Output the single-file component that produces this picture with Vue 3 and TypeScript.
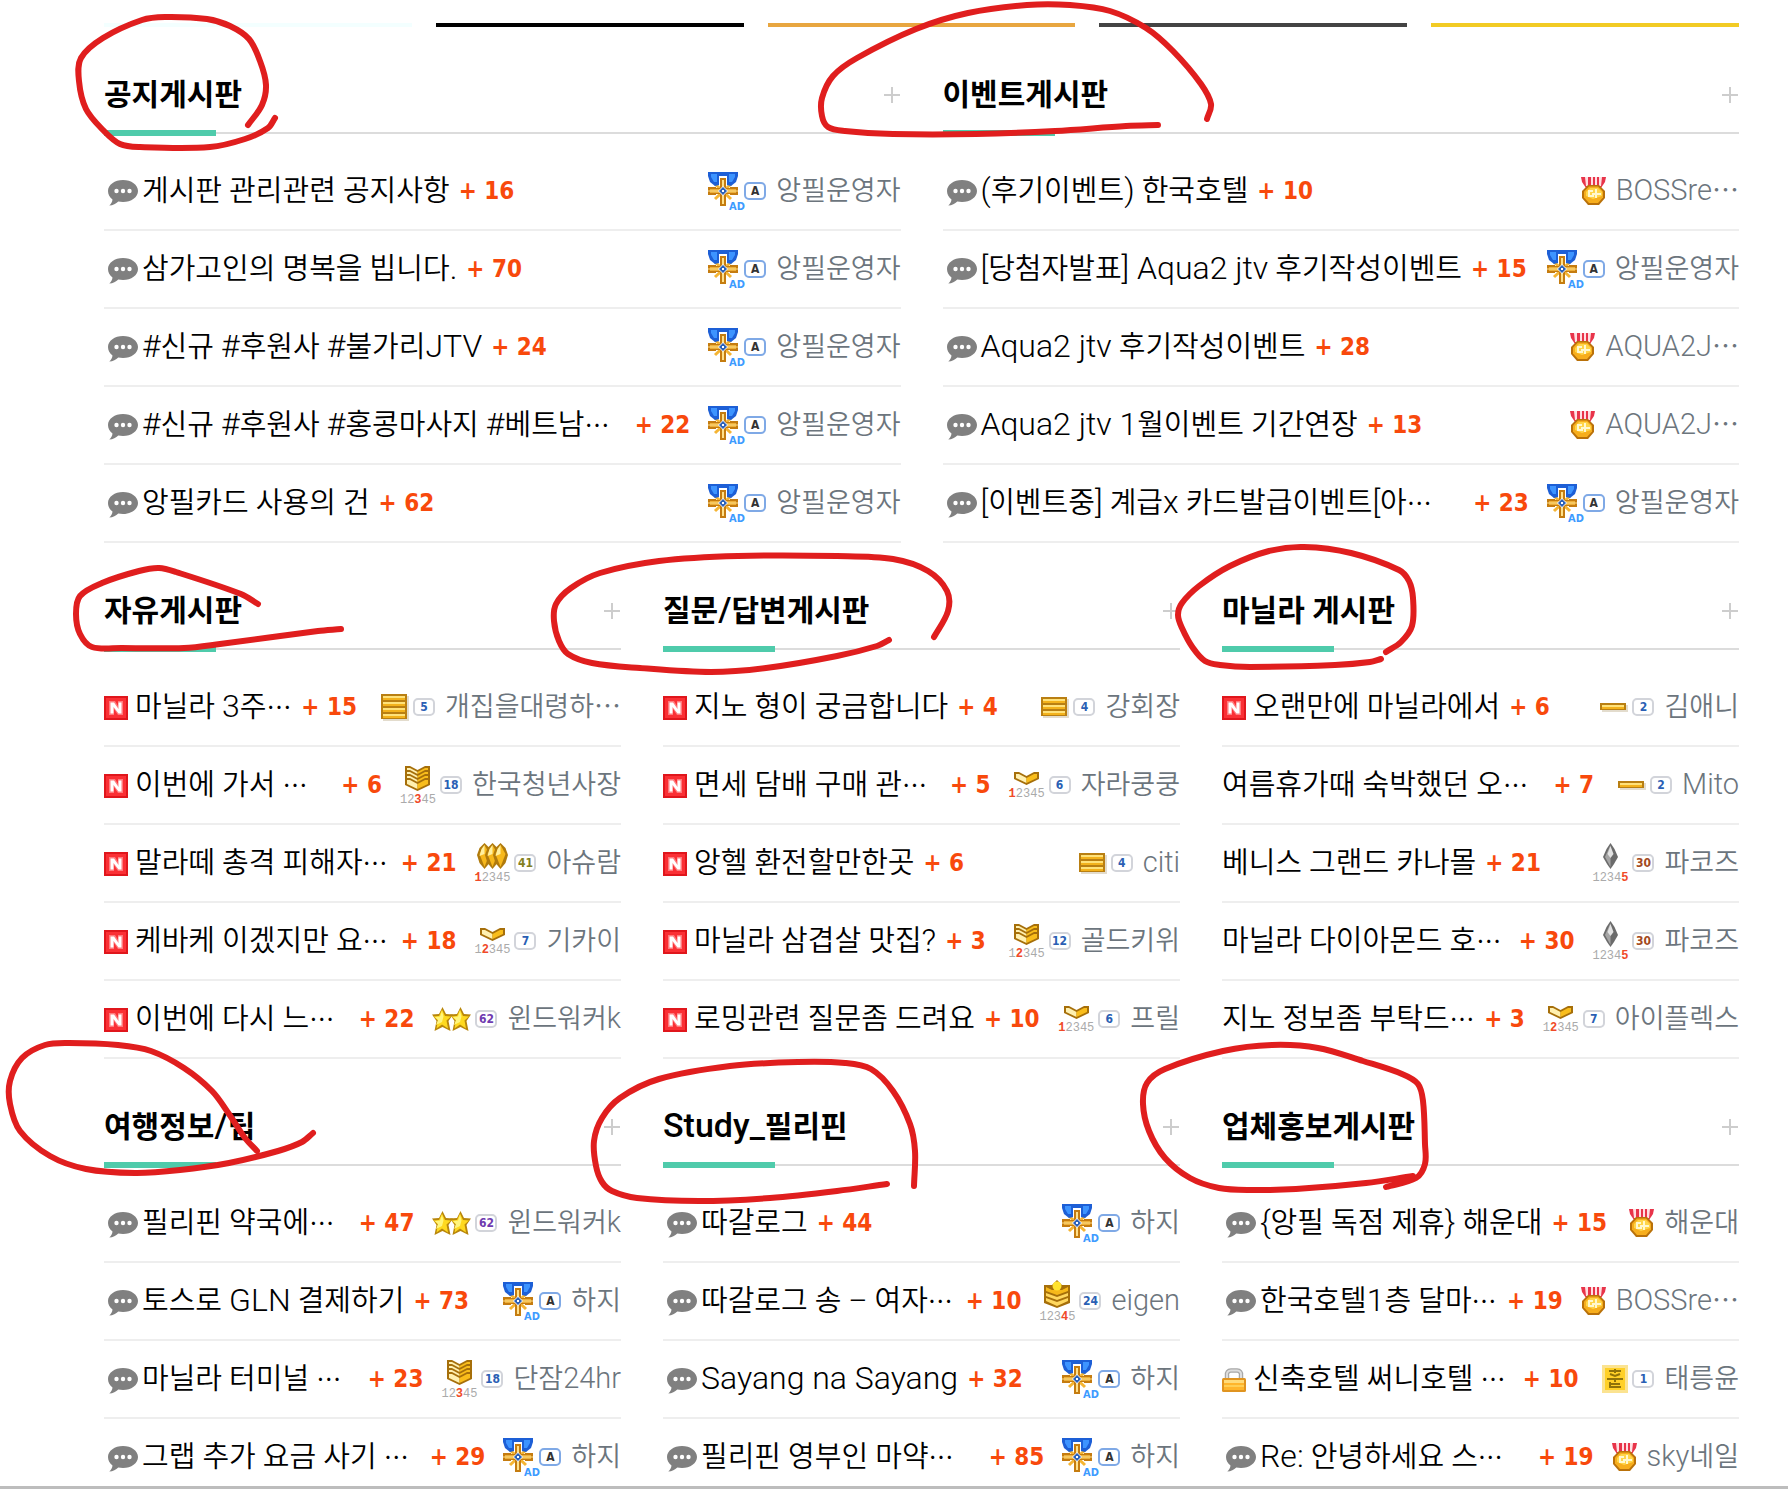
<script setup lang="ts">
type Art = 'admin' | 'gold' | 'bars' | 'chevron' | 'crown' | 'gems' | 'silver' | 'stars' | 'card'
type Icon = 'talk' | 'new' | 'lock' | ''

interface Rank {
  art: Art
  n?: number
  step?: number
  badge?: string
  tone?: string
}
interface Post {
  icon: Icon
  title: string
  count: number
  rank: Rank
  author: string
}
interface Board {
  name: string
  posts: Post[]
}
interface Run {
  text: string
  kind: 'latin' | 'dots' | 'hangul'
}
type Point = [number, number]

const admin: Rank = { art: 'admin', badge: 'A', tone: 'admin' }
const gold: Rank = { art: 'gold' }
const stars: Rank = { art: 'stars', badge: '62', tone: 'purple' }
const silver: Rank = { art: 'silver', step: 5, badge: '30', tone: 'brown' }
const gems: Rank = { art: 'gems', step: 1, badge: '41', tone: 'olive' }
const card: Rank = { art: 'card', badge: '1' }
const crown: Rank = { art: 'crown', step: 4, badge: '24' }
const bars = (n: number, badge: string): Rank => ({ art: 'bars', n, badge })
const chevron = (n: number, step: number, badge: string): Rank => ({ art: 'chevron', n, step, badge })

const post = (icon: Icon, title: string, count: number, rank: Rank, author: string): Post => ({
  icon, title, count, rank, author,
})

const banners = ['#f3ffff', '#000000', '#e8a640', '#444444', '#f2cb24']

const groups: Board[][] = [
  [
    {
      name: '공지게시판',
      posts: [
        post('talk', '게시판 관리관련 공지사항', 16, admin, '앙필운영자'),
        post('talk', '삼가고인의 명복을 빕니다.', 70, admin, '앙필운영자'),
        post('talk', '#신규 #후원사 #불가리JTV', 24, admin, '앙필운영자'),
        post('talk', '#신규 #후원사 #홍콩마사지 #베트남⋯', 22, admin, '앙필운영자'),
        post('talk', '앙필카드 사용의 건', 62, admin, '앙필운영자'),
      ],
    },
    {
      name: '이벤트게시판',
      posts: [
        post('talk', '(후기이벤트) 한국호텔', 10, gold, 'BOSSre⋯'),
        post('talk', '[당첨자발표] Aqua2 jtv 후기작성이벤트', 15, admin, '앙필운영자'),
        post('talk', 'Aqua2 jtv 후기작성이벤트', 28, gold, 'AQUA2J⋯'),
        post('talk', 'Aqua2 jtv 1월이벤트 기간연장', 13, gold, 'AQUA2J⋯'),
        post('talk', '[이벤트중] 계급x 카드발급이벤트[아⋯', 23, admin, '앙필운영자'),
      ],
    },
  ],
  [
    {
      name: '자유게시판',
      posts: [
        post('new', '마닐라 3주⋯', 15, bars(4, '5'), '개집을대령하⋯'),
        post('new', '이번에 가서 ⋯', 6, chevron(4, 3, '18'), '한국청년사장'),
        post('new', '말라떼 총격 피해자⋯', 21, gems, '아슈람'),
        post('new', '케바케 이겠지만 요⋯', 18, chevron(1, 2, '7'), '기카이'),
        post('new', '이번에 다시 느⋯', 22, stars, '윈드워커k'),
      ],
    },
    {
      name: '질문/답변게시판',
      posts: [
        post('new', '지노 형이 궁금합니다', 4, bars(3, '4'), '강회장'),
        post('new', '면세 담배 구매 관⋯', 5, chevron(1, 1, '6'), '자라쿵쿵'),
        post('new', '앙헬 환전할만한곳', 6, bars(3, '4'), 'citi'),
        post('new', '마닐라 삼겹살 맛집?', 3, chevron(3, 2, '12'), '골드키위'),
        post('new', '로밍관련 질문좀 드려요', 10, chevron(1, 1, '6'), '프릴'),
      ],
    },
    {
      name: '마닐라 게시판',
      posts: [
        post('new', '오랜만에 마닐라에서', 6, bars(1, '2'), '김애니'),
        post('', '여름휴가때 숙박했던 오⋯', 7, bars(1, '2'), 'Mito'),
        post('', '베니스 그랜드 카나몰', 21, silver, '파코즈'),
        post('', '마닐라 다이아몬드 호⋯', 30, silver, '파코즈'),
        post('', '지노 정보좀 부탁드⋯', 3, chevron(1, 2, '7'), '아이플렉스'),
      ],
    },
  ],
  [
    {
      name: '여행정보/팁',
      posts: [
        post('talk', '필리핀 약국에⋯', 47, stars, '윈드워커k'),
        post('talk', '토스로 GLN 결제하기', 73, admin, '하지'),
        post('talk', '마닐라 터미널 ⋯', 23, chevron(4, 3, '18'), '단잠24hr'),
        post('talk', '그랩 추가 요금 사기 ⋯', 29, admin, '하지'),
      ],
    },
    {
      name: 'Study_필리핀',
      posts: [
        post('talk', '따갈로그', 44, admin, '하지'),
        post('talk', '따갈로그 송 – 여자⋯', 10, crown, 'eigen'),
        post('talk', 'Sayang na Sayang', 32, admin, '하지'),
        post('talk', '필리핀 영부인 마약⋯', 85, admin, '하지'),
      ],
    },
    {
      name: '업체홍보게시판',
      posts: [
        post('talk', '{앙필 독점 제휴} 해운대', 15, gold, '해운대'),
        post('talk', '한국호텔1층 달마⋯', 19, gold, 'BOSSre⋯'),
        post('lock', '신축호텔 써니호텔 ⋯', 10, card, '태릉윤'),
        post('talk', 'Re: 안녕하세요 스⋯', 19, gold, 'sky네일'),
      ],
    },
  ],
]

const isCut = (title: string): boolean => title.endsWith('⋯')

// Latin letters are set a little larger than the Hangul beside them
function runs(text: string): Run[] {
  const parts = text.match(/[\x21-\x7e]+(?: [\x21-\x7e]+)*|⋯|[^\x21-\x7e⋯]+/g) ?? []
  return parts.map((part) => ({
    text: part,
    kind: part === '⋯' ? 'dots' : /^[\x21-\x7e]/.test(part) ? 'latin' : 'hangul',
  }))
}

// Hand-drawn pen strokes, each a list of points joined by a smooth curve
const strokes: Point[][] = [
  [[248, 124], [262, 104], [266, 84], [260, 60], [249, 38], [230, 25], [207, 18], [165, 16], [142, 19], [103, 37], [81, 57], [79, 80], [86, 108], [103, 129], [120, 143], [140, 146], [210, 146], [245, 138], [268, 127], [275, 117]],
  [[1207, 118], [1211, 103], [1201, 83], [1173, 50], [1146, 27], [1110, 10], [1070, 4], [1027, 4], [968, 12], [916, 28], [857, 57], [833, 75], [822, 97], [822, 115], [828, 126], [845, 130], [893, 133], [976, 133], [1055, 130], [1126, 125], [1158, 124]],
  [[258, 603], [241, 593], [176, 571], [159, 567], [139, 570], [102, 582], [80, 595], [76, 613], [80, 633], [92, 646], [122, 647], [184, 647], [220, 643], [318, 630], [341, 628]],
  [[934, 636], [948, 610], [947, 590], [928, 570], [893, 558], [837, 555], [738, 555], [659, 560], [600, 572], [571, 587], [556, 603], [554, 620], [559, 640], [568, 653], [592, 662], [640, 667], [711, 671], [766, 667], [837, 655], [877, 645], [889, 639]],
  [[1386, 651], [1401, 641], [1412, 625], [1413, 597], [1409, 580], [1399, 569], [1351, 552], [1304, 546], [1269, 550], [1230, 565], [1199, 585], [1182, 602], [1178, 614], [1182, 627], [1193, 647], [1205, 660], [1220, 664], [1250, 666], [1335, 664], [1370, 661], [1381, 658]],
  [[257, 1150], [245, 1137], [229, 1113], [212, 1090], [184, 1067], [151, 1050], [118, 1044], [69, 1042], [45, 1044], [22, 1057], [10, 1080], [10, 1103], [20, 1130], [50, 1155], [86, 1168], [135, 1172], [180, 1169], [229, 1162], [278, 1150], [302, 1141], [313, 1132]],
  [[914, 1185], [915, 1150], [910, 1123], [893, 1090], [871, 1068], [845, 1062], [798, 1061], [730, 1065], [659, 1078], [620, 1097], [602, 1117], [594, 1140], [596, 1165], [602, 1181], [612, 1190], [637, 1197], [699, 1200], [770, 1197], [837, 1190], [887, 1183]],
  [[1386, 1186], [1416, 1177], [1425, 1163], [1425, 1143], [1423, 1100], [1418, 1083], [1402, 1073], [1363, 1060], [1318, 1047], [1272, 1044], [1223, 1050], [1165, 1068], [1147, 1082], [1143, 1103], [1149, 1130], [1165, 1157], [1190, 1177], [1219, 1187], [1250, 1189], [1296, 1188], [1366, 1182], [1413, 1175]],
]

function smooth(pts: Point[]): string {
  let d = `M${pts[0][0]} ${pts[0][1]}`
  for (let i = 0; i < pts.length - 1; i++) {
    const a = pts[Math.max(i - 1, 0)]
    const b = pts[i]
    const c = pts[i + 1]
    const e = pts[Math.min(i + 2, pts.length - 1)]
    const seg = Math.hypot(c[0] - b[0], c[1] - b[1])
    const before = Math.hypot(c[0] - a[0], c[1] - a[1]) || 1
    const after = Math.hypot(e[0] - b[0], e[1] - b[1]) || 1
    const k = seg / 3
    const x1 = b[0] + ((c[0] - a[0]) / before) * k
    const y1 = b[1] + ((c[1] - a[1]) / before) * k
    const x2 = c[0] - ((e[0] - b[0]) / after) * k
    const y2 = c[1] - ((e[1] - b[1]) / after) * k
    d += `C${x1.toFixed(1)} ${y1.toFixed(1)} ${x2.toFixed(1)} ${y2.toFixed(1)} ${c[0]} ${c[1]}`
  }
  return d
}
const strokePaths = strokes.map(smooth)
</script>

<template>
  <div class="page" lang="ko">
    <main class="content">
      <div class="banners">
        <span v-for="color in banners" :key="color" class="banner" :style="{ background: color }"></span>
      </div>

      <div v-for="(group, g) in groups" :key="g" class="group">
        <section v-for="board in group" :key="board.name" class="board">
          <header class="head">
            <h2 class="name"><span v-for="(run, i) in runs(board.name)" :key="i" :class="run.kind">{{ run.text }}</span></h2>
            <a class="more" href="#" :aria-label="board.name + ' 더보기'">
              <svg width="17" height="17" viewBox="0 0 17 17"><path d="M8 0V16M0 8H16" stroke="#cdcdcd" stroke-width="2" /></svg>
            </a>
          </header>
          <ul class="posts">
            <li v-for="post in board.posts" :key="post.title" class="post">
              <a class="title" :class="{ cut: isCut(post.title) }" href="#">
                <svg v-if="post.icon === 'talk'" class="talk" width="30" height="26" viewBox="0 0 30 26">
                  <path d="M15 0C23.300 0 30 4.800 30 11S23.300 22 15 22c-1.700 0-3.300-.2-4.700-.5C8 23.800 5 25.400 1.300 25.600c1.800-1.800 3-3.900 3.200-6.100C1.700 17.500 0 14.500 0 11 0 4.800 6.700 0 15 0z" fill="#808080" />
                  <circle cx="8.500" cy="11" r="2.200" fill="#fff" /><circle cx="15" cy="11" r="2.200" fill="#fff" /><circle cx="21.500" cy="11" r="2.200" fill="#fff" />
                </svg>
                <svg v-else-if="post.icon === 'new'" class="mark" width="24" height="24" viewBox="0 0 24 24">
                  <rect width="24" height="24" fill="#e0161c" /><rect x="2" y="2" width="20" height="20" fill="#fa3035" />
                  <path d="M5 5h6l3 5V5h5v14h-5l-4-6v6H5z" fill="#ff7a7d" />
                  <path d="M6.500 6.500h3.500l4.500 6.500V6.500H17.500v11H14.500L9.500 11v6.500H6.500z" fill="#fff" />
                </svg>
                <svg v-else-if="post.icon === 'lock'" class="mark" width="24" height="24" viewBox="0 0 24 24">
                  <path d="M5 12V7.500a4 4 0 0 1 4-5h6a4 4 0 0 1 4 5V12" fill="none" stroke="#a8a8a8" stroke-width="4.500" />
                  <path d="M5 12V7.500a4 4 0 0 1 4-5h6a4 4 0 0 1 4 5V12" fill="none" stroke="#dedede" stroke-width="2" />
                  <rect y="10" width="24" height="14" rx="1.500" fill="#e09420" /><rect x="2" y="12" width="20" height="10" fill="#ffb52c" />
                  <rect x="2" y="12" width="20" height="3" fill="#ffdb7a" /><rect x="2" y="17" width="20" height="2" fill="#ffcf55" />
                </svg>
                <span class="text"><span v-for="(run, i) in runs(post.title)" :key="i" :class="run.kind">{{ run.text }}</span></span>
              </a>
              <span class="count">+ {{ post.count }}</span>
              <a class="author" href="#">
                <span class="rank">
                  <svg v-if="post.rank.art === 'admin'" class="admin-art" width="36" height="38" viewBox="0 0 36 38">
                    <path d="M7 12l16 15M23 12L7 27" stroke="#f5b534" stroke-width="3" />
                    <path d="M0 0h30v4l-2 6-5 4-4-1V5h-8v8l-4 1-5-4-2-6z" fill="#1d5fd6" />
                    <path d="M3 2h6v8l-3 0-3-5zM21 2h6v3l-3 5h-3z" fill="#3d94ff" />
                    <path d="M11 4h8v9h-8z" fill="#fff" />
                    <path d="M12 6h6v28h-6zM0 15h8v1h14v-1h8v8h-8v-1H8v1H0z" fill="#c57c10" />
                    <path d="M2 17h26v4H2z" fill="#edb03a" /><path d="M14 8h2v24h-2zM0 18.500h30v1H0z" fill="#ffe08a" />
                    <path d="M15 14l5 5-5 5-5-5z" fill="#eef3ff" /><path d="M15 15l4 4-4 4-4-4z" fill="#2c62b8" /><rect x="14" y="18" width="2" height="2" fill="#fff" />
                    <text x="21" y="38" class="ad">AD</text>
                  </svg>
                  <svg v-else-if="post.rank.art === 'gold'" width="25" height="29" viewBox="0 0 25 29">
                    <path d="M0 0h25l-1 5-4 6H5L1 5z" fill="#e8344a" />
                    <path d="M4 0h3v9H5zM10 0h2v10h-2zM14 0h2v10h-2zM18 0h3l-1 9h-2z" fill="#ffdfe2" />
                    <path d="M7 8h11l6 6v7l-6 7H7l-6-7v-7z" fill="#b9710a" />
                    <path d="M8 9.500h9l5 5v6l-5 5.500H8l-5-5.500v-6z" fill="#f7ae1d" />
                    <path d="M9 11h8l4 4v4l-9 3-7-3v-4z" fill="#ffd54a" />
                    <path d="M12 14H8v5h4v-3M15 12v9M12 17h8" fill="none" stroke="#fff8cf" stroke-width="2" />
                  </svg>
                  <svg v-else-if="post.rank.art === 'bars'" class="bars-art" width="28" :height="(post.rank.n ?? 1) * 6 + 3" :viewBox="`0 0 28 ${(post.rank.n ?? 1) * 6 + 3}`">
                    <rect x="2" y="2" width="26" :height="(post.rank.n ?? 1) * 6 + 1" fill="#e3dccd" />
                    <rect width="26" :height="(post.rank.n ?? 1) * 6 + 1" fill="#b97f12" />
                    <g v-for="i in post.rank.n" :key="i">
                      <rect x="2" :y="i * 6 - 4" width="22" height="4" fill="#f3b21c" />
                      <rect x="2" :y="i * 6 - 4" width="22" height="2" fill="#ffe27a" />
                    </g>
                  </svg>
                  <svg v-else-if="post.rank.art === 'stars'" width="39" height="25" viewBox="0 0 39 25">
                    <g v-for="x in [0, 18]" :key="x" :transform="`translate(${x} 0)`">
                      <path d="M10.500 0l3.500 7 7 .5-4.500 6.500 2 10-8-4-8 4 2-10L0 7.500 7 7z" fill="#b8860b" />
                      <path d="M10 2.500l3 6.500 6 .5-4.500 4 1.500 8-6-4-5.500 4 1.500-8L1.500 9.500 7 9z" fill="#ffd91f" />
                      <path d="M10 4l1.500 5.500L10 15l-6 3 2-5-3-3 5-.5z" fill="#fff57d" />
                    </g>
                  </svg>
                  <svg v-else-if="post.rank.art === 'card'" class="bars-art" width="26" height="28" viewBox="0 0 26 28">
                    <rect width="26" height="28" fill="#fbe391" /><rect x="3" y="3" width="20" height="22" fill="#ffd027" />
                    <path d="M7 6h12M13 4v4M8 9l5 2 5-2M5 14h16M13 14v3M8 17v5h11M9 19h9" fill="none" stroke="#8f7209" stroke-width="2" />
                  </svg>
                  <span v-else class="stepped">
                    <svg v-if="post.rank.art === 'chevron'" width="25" :height="(post.rank.n ?? 1) * 4 + 9" :viewBox="`0 0 25 ${(post.rank.n ?? 1) * 4 + 9}`">
                      <g v-for="i in post.rank.n" :key="i" :transform="`translate(0 ${i * 4 - 4})`">
                        <path d="M0 0h5l7.500 4L20 0h5v7l-12.500 6L0 7z" fill="#a66f0a" />
                        <path d="M2 2h3l7.500 4v5L2 6z" fill="#fff0b0" />
                        <path d="M23 2h-3l-7.500 4v5L23 6z" fill="#f9bd1b" />
                      </g>
                    </svg>
                    <svg v-else-if="post.rank.art === 'crown'" width="26" height="28" viewBox="0 0 26 28">
                      <path d="M13 0l5 5h8v18l-13 5-13-5V5h8z" fill="#a66f0a" />
                      <path d="M2 7l6 3h10l6-3v4l-11 4L2 11z" fill="#f6b81a" />
                      <path d="M2 13l11 4 11-4v3l-11 4-11-4zM2 18l11 4 11-4v3l-11 5-11-5z" fill="#ffd75e" />
                      <circle cx="13" cy="6" r="4.500" fill="#ffe22e" />
                    </svg>
                    <svg v-else-if="post.rank.art === 'gems'" width="31" height="26" viewBox="0 0 31 26">
                      <g v-for="x in [0, 8, 16]" :key="x" :transform="`translate(${x} 0)`">
                        <path d="M7.500 0l5 5 2.500 7-2.500 8-5 6-5-6L0 12l2.500-7z" fill="#b07a0c" />
                        <path d="M7.500 2l5 9-5 13-5-13z" fill="#f7b81c" /><path d="M7.500 2v9l-5 2 2-7z" fill="#fff0a0" />
                      </g>
                    </svg>
                    <svg v-else width="15" height="26" viewBox="0 0 15 26">
                      <path d="M7.500 0l4 6L15 14l-4 7-3.500 5L4 21 0 14l3.500-8z" fill="#6b6b6b" />
                      <path d="M7.500 2v22L2 14z" fill="#a5a5a5" /><path d="M7.500 3l3 8-3 4-3-4z" fill="#e2e2e2" />
                    </svg>
                    <span class="steps"><span v-for="s in 5" :key="s" :class="{ on: s === post.rank.step }">{{ s }}</span></span>
                  </span>
                  <span v-if="post.rank.badge" class="badge" :class="post.rank.tone">{{ post.rank.badge }}</span>
                </span>
                <span class="text"><span v-for="(run, i) in runs(post.author)" :key="i" :class="run.kind">{{ run.text }}</span></span>
              </a>
            </li>
          </ul>
        </section>
      </div>
    </main>
    <hr class="end" />

    <svg class="pen" viewBox="0 -1 1788 1489" aria-hidden="true">
      <path v-for="(d, i) in strokePaths" :key="i" :d="d" />
    </svg>
  </div>
</template>

<style>
body {
  margin: 0;
  background: #fff;
}
</style>

<style scoped>
.page {
  position: relative;
  overflow: hidden;
  font-family: Roboto, "Noto Sans CJK KR", sans-serif;
  color: #000;
}
.content {
  padding: 23px 49px 0 104px;
}
.banners {
  display: flex;
  gap: 24px;
}
.banner {
  flex: 1;
  height: 4px;
}
.group {
  display: flex;
  gap: 42px;
}
.board {
  flex: 1 1 0;
  min-width: 0;
}
.head {
  position: relative;
  box-sizing: border-box;
  height: 107px;
  padding-bottom: 17px;
  display: flex;
  align-items: flex-end;
  justify-content: space-between;
  border-bottom: 2px solid #dcdcdc;
}
.head::after {
  content: "";
  position: absolute;
  left: 0;
  bottom: -4px;
  width: 112px;
  height: 6px;
  background: #4fcbab;
}
.name {
  margin: 0;
  height: 40px;
  font-size: 30px;
  line-height: 40px;
  font-weight: 700;
  white-space: nowrap;
}
.name .latin {
  font-size: 34px;
  font-weight: 500;
}
.more {
  display: flex;
  align-items: center;
  height: 40px;
}
.posts {
  list-style: none;
  margin: 0;
  padding: 19px 0 0;
}
.post {
  display: flex;
  align-items: center;
  height: 42px;
  padding: 17px 0;
  border-bottom: 2px solid #eee;
  white-space: nowrap;
}
.group:last-of-type .post:last-child {
  padding-bottom: 8px;
  border-bottom: 0;
}
.title {
  display: flex;
  align-items: center;
  color: inherit;
  text-decoration: none;
  font-size: 29px;
  font-weight: 350;
  line-height: 42px;
}
.title.cut {
  flex: 1 1 0;
  min-width: 0;
}
.text {
  height: 42px;
}
.latin,
.dots {
  line-height: 1;
}
.text .latin {
  font-size: 32px;
}
.author .latin {
  font-size: 29px;
}
.dots {
  font-family: "Noto Sans CJK KR", sans-serif;
}
.title .dots {
  font-size: 25px;
}
.talk {
  flex: none;
  margin: 3px 4px 0;
}
.mark {
  flex: none;
  margin: 2px 7px 0 0;
}
.count {
  margin-left: 9px;
  font: bold 24px/42px "DejaVu Sans Condensed", "DejaVu Sans", sans-serif;
  color: #f8490c;
}
.author {
  display: flex;
  align-items: center;
  gap: 10px;
  margin-left: auto;
  padding-left: 18px;
  color: #6c757d;
  text-decoration: none;
  font-size: 27px;
  font-weight: 350;
  line-height: 42px;
}
.rank {
  display: flex;
  align-items: center;
  gap: 4px;
}
.admin-art {
  overflow: visible;
}
.bars-art {
  margin-left: 6px;
}
.ad {
  font: bold 11px "DejaVu Sans Condensed", "DejaVu Sans", sans-serif;
  fill: #3d9bff;
}
.stepped {
  display: flex;
  flex-direction: column;
  align-items: center;
  gap: 4px;
}
.steps {
  font: 12px/10px "Liberation Mono", monospace;
  color: #aaa;
}
.steps .on {
  font-weight: bold;
  color: #f04a28;
}
.badge {
  box-sizing: border-box;
  width: 22px;
  height: 18px;
  border: 2px solid #d2d4da;
  border-radius: 5px;
  font: bold 12px/14px "DejaVu Sans Condensed", "DejaVu Sans", sans-serif;
  text-align: center;
  color: #2a5fb4;
}
.badge.admin {
  margin-left: -4px;
  border-color: #7fa9e6;
  color: #333;
}
.badge.purple {
  color: #6f3bb0;
}
.badge.brown {
  color: #a34a22;
}
.badge.olive {
  color: #83801f;
}
.end {
  margin: 0;
  border: 0;
  height: 3px;
  background: #bdbdbd;
}
.pen {
  position: absolute;
  top: 0;
  left: 0;
  width: 100%;
  pointer-events: none;
}
.pen path {
  fill: none;
  stroke: #e01e1e;
  stroke-width: 6;
  stroke-linecap: round;
  stroke-linejoin: round;
}
</style>
